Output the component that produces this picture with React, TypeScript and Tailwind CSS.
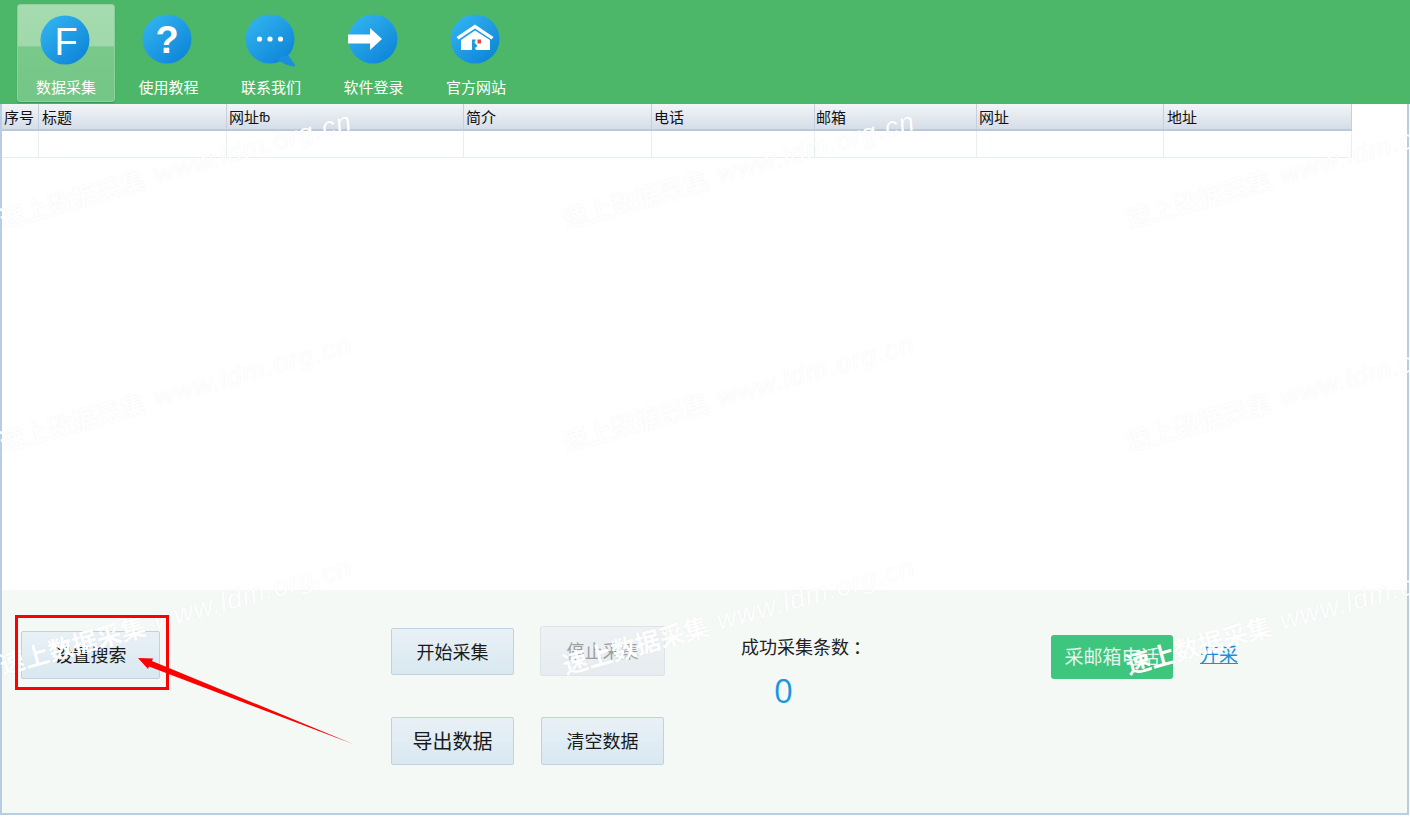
import React from "react";

const FONT = "font-['Noto_Sans_CJK_SC','Liberation_Sans',sans-serif]";

function Disc({ id }: { id: string }) {
  return (
    <>
      <defs>
        <linearGradient id={id} x1="0.15" y1="0.1" x2="0.85" y2="0.9">
          <stop offset="0" stopColor="#30b1ee" />
          <stop offset="1" stopColor="#0f86d9" />
        </linearGradient>
      </defs>
      <circle cx="26" cy="26" r="24.5" fill={`url(#${id})`} />
    </>
  );
}

function IconF() {
  return (
    <svg width="52" height="52" viewBox="0 0 52 52">
      <Disc id="g1" />
      <text x="27" y="41" textAnchor="middle" fontSize="38" fill="#fff" fontFamily="Liberation Sans, sans-serif">F</text>
    </svg>
  );
}
function IconQ() {
  return (
    <svg width="52" height="52" viewBox="0 0 52 52">
      <Disc id="g2" />
      <text x="26" y="40" textAnchor="middle" fontSize="38" fontWeight="700" fill="#fff" fontFamily="Liberation Sans, sans-serif">?</text>
    </svg>
  );
}
function IconChat() {
  return (
    <svg width="54" height="56" viewBox="0 0 54 56">
      <Disc id="g3" />
      <path d="M36 44 L44 42 L51 52 Q52 54 49 53.5 Q41 52 34 47 Z" fill="#1a8fdd" />
      <circle cx="15.5" cy="26" r="2.6" fill="#fff" />
      <circle cx="26" cy="26" r="2.6" fill="#fff" />
      <circle cx="36.5" cy="26" r="2.6" fill="#fff" />
    </svg>
  );
}
function IconArrow() {
  return (
    <svg width="52" height="52" viewBox="0 0 52 52">
      <Disc id="g4" />
      <path d="M1 21.5H23V15L35 26L23 37V30.5H1Z" fill="#fff" />
    </svg>
  );
}
function IconHome() {
  return (
    <svg width="52" height="52" viewBox="0 0 52 52">
      <Disc id="g5" />
      <path d="M7.5 24 L26 11.5 L44.5 24 L42.5 26.5 L26 15.5 L9.5 26.5Z" fill="#fff" />
      <path d="M12 27 L26 17.5 L41 27 V37 H27 L26 35 L28.5 33 L25.5 29.5 L27 26.5 H23 V37 H12Z" fill="#fff" />
      <rect x="28.5" y="26.5" width="3.5" height="4" fill="#f0443e" />
    </svg>
  );
}

const tools = [
  { label: "数据采集", icon: <IconF />, active: true, iconClass: "mr-[2px] mt-[9px] mb-[10px]" },
  { label: "使用教程", icon: <IconQ />, iconClass: "mr-[3px] mt-[9px] mb-[10px]" },
  { label: "联系我们", icon: <IconChat />, iconClass: "mt-[9px] mb-[6px]" },
  { label: "软件登录", icon: <IconArrow />, iconClass: "mr-[2px] mt-[9px] mb-[10px]" },
  { label: "官方网站", icon: <IconHome />, iconClass: "mr-[2px] mt-[9px] mb-[10px]" },
];

const columns: { t: React.ReactNode; c: string }[] = [
  { t: "序号", c: "w-[37px] pl-[2px]" },
  { t: "标题", c: "w-[188px] pl-[3px]" },
  { t: <>网址<span className="text-[13px] tracking-[-1px]">fb</span></>, c: "w-[237px] pl-[2px]" },
  { t: "简介", c: "w-[188px] pl-[2px]" },
  { t: "电话", c: "w-[163px] pl-[2px]" },
  { t: "邮箱", c: "w-[162px] pl-[1px]" },
  { t: "网址", c: "w-[187px] pl-[2px]" },
  { t: "地址", c: "w-[188px] pl-[3px]" },
];

function Btn({ children, className = "" }: { children: React.ReactNode; className?: string }) {
  return (
    <button
      className={`flex items-center justify-center rounded-[2px] border border-[#c2d2dc] bg-gradient-to-b from-[#e9f1f6] to-[#d9e8f1] pb-[1px] text-[18px] text-[#1a1a1a] ${FONT} ${className}`}
    >
      {children}
    </button>
  );
}

function Watermarks() {
  const cells = Array.from({ length: 9 });
  return (
    <div className="pointer-events-none absolute left-0 top-[107px] z-10 grid h-[669px] w-[1410px] grid-cols-[563px_563px_284px] grid-rows-[223px_223px_223px] overflow-hidden">
      {cells.map((_, i) => (
        <div key={i} className="flex items-center">
          <div
            className={`flex origin-[0_50%] -rotate-[15.5deg] items-center gap-[10px] whitespace-nowrap text-[#fefefe] [text-shadow:0_0_2px_rgba(0,0,0,0.05)] ${FONT}`}
          >
            <span className="text-[25px] font-bold leading-none">速上数据采集</span>
            <span className="font-['Liberation_Sans',sans-serif] text-[27px] italic leading-none tracking-[1px]">www.ldm.org.cn</span>
          </div>
        </div>
      ))}
    </div>
  );
}

export default function App() {
  return (
    <div className={`relative flex h-[817px] w-[1410px] flex-col overflow-hidden bg-white ${FONT}`}>
      <header className="flex h-[104px] shrink-0 items-start gap-[4.5px] bg-[#4cb768] pl-[17px] pt-[4px]">
        {tools.map((t) => (
          <div
            key={t.label}
            className={`flex h-[98px] w-[98px] flex-col items-center rounded-[3px] ${
              t.active
                ? "border border-[#8fd09e] bg-[linear-gradient(#a6dcb0_0%,#a0d9ab_42%,#78c98a_44%,#74c687_100%)] shadow-[0_1px_1px_rgba(40,110,60,0.5)]"
                : ""
            }`}
          >
            <div className={`h-[52px] ${t.iconClass}`}>{t.icon}</div>
            <span className="mt-[auto] mb-[4px] text-[15px] leading-[22px] text-white">{t.label}</span>
          </div>
        ))}
      </header>

      <div className="mb-[2px] mr-[1px] flex min-h-0 flex-1 flex-col border-x-2 border-b-2 border-[#b9cde2]">
        <main className="flex-1 bg-white">
          <div className="flex h-[27px] w-[1350px] border-b-2 border-[#b9c9d9] bg-gradient-to-b from-[#f3f6f8] to-[#d5dde8]">
            {columns.map((c) => (
              <div
                key={c.c}
                className={`flex shrink-0 items-center border-r border-[#c4d0dc] pb-[1px] text-[15px] leading-none text-[#111] ${c.c}`}
              >
                {c.t}
              </div>
            ))}
          </div>
          <div className="flex h-[27px] w-[1350px] border-b border-[#e8efef]">
            {columns.map((c) => (
              <div key={c.c} className={`shrink-0 border-r border-[#e8efef] ${c.c}`} />
            ))}
          </div>
        </main>

        <section className="flex h-[223px] shrink-0 items-start bg-[#f4f9f6]">
          <Btn className="ml-[19px] mt-[41px] h-[48px] w-[139px]">设置搜索</Btn>

          <div className="ml-[231px] mt-[38px] grid grid-cols-[123px_125px] grid-rows-[48px_48px] gap-x-[26px] gap-y-[41px]">
            <Btn className="h-[47px] w-[123px]">开始采集</Btn>
            <Btn className="-mt-[2px] h-[50px] w-[125px] !border-[#dde5e9] !from-[#eef2f4] !to-[#e6ecef] !text-[#9aa0a4]">停止采集</Btn>
            <Btn className="h-[48px] w-[123px] !text-[20px]">导出数据</Btn>
            <Btn className="ml-[1px] h-[48px] w-[123px]">清空数据</Btn>
          </div>

          <div className="ml-[76px] mt-[44px] flex w-[122px] flex-col">
            <span className="whitespace-nowrap text-[18px] leading-[24px] text-[#222]">成功采集条数<span className="ml-[4px]">：</span></span>
            <span className="ml-[33px] mt-[13px] font-['Open_Sans',sans-serif] text-[33px] leading-[40px] text-[#1c94e0]">0</span>
          </div>

          <button className="ml-[188px] mt-[45px] h-[44px] w-[122px] rounded-[3px] bg-[#3ec67f] pb-[1px] text-[19px] text-[#e4f5ec]">
            采邮箱电话
          </button>
          <a className="ml-[27px] mt-[52px] text-[19px] leading-[24px] text-[#1a8fe0] underline">开采</a>
        </section>
      </div>

      <Watermarks />

      <div className="pointer-events-none absolute left-[15px] top-[615px] z-20 h-[75px] w-[154px] border-[3px] border-[#ff0000]" />
      <svg className="pointer-events-none absolute left-0 top-0 z-20" width="1410" height="817">
        <polygon points="138,658 153,658.5 152,661 353,744 149,666.5 148,669" fill="#ff0000" />
      </svg>
    </div>
  );
}
